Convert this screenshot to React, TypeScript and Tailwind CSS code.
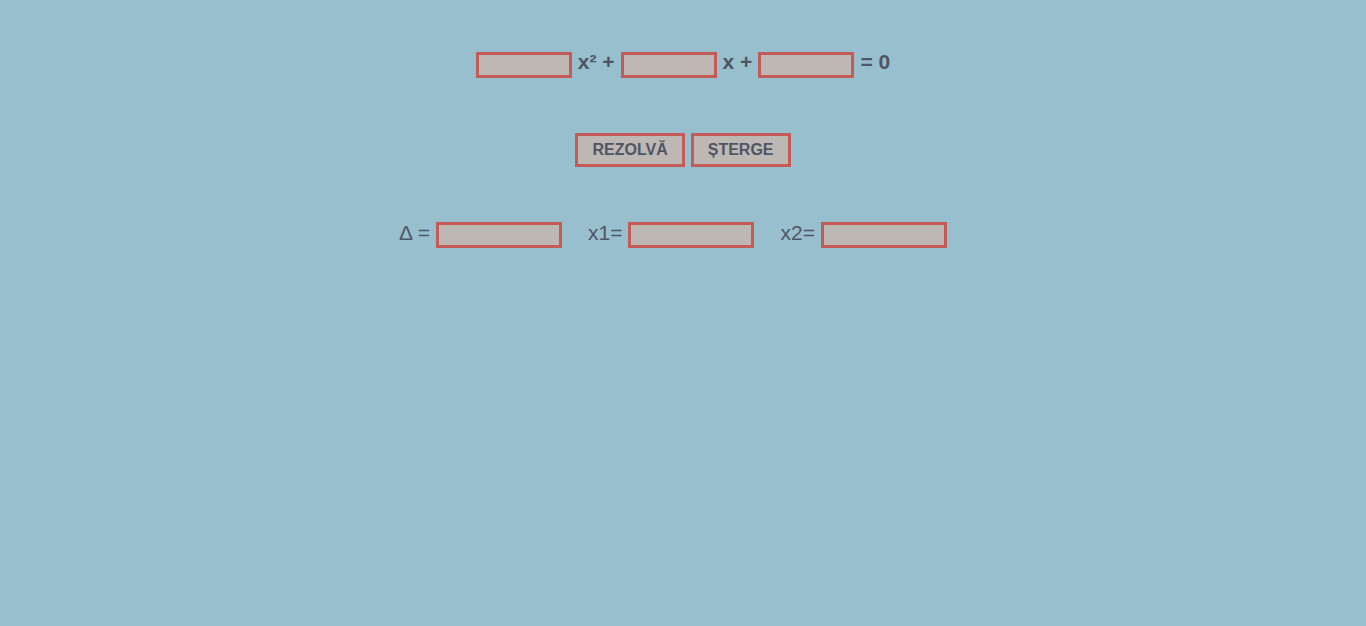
import { useState } from "react";

const box = "h-[26px] border-3 border-[#c45b56] bg-[#bdb8b4] px-1 text-base outline-none";
const button =
  "h-[34px] border-3 border-[#c45b56] bg-[#bdb8b4] px-3.5 text-base leading-7 font-bold";

export default function App() {
  const [a, setA] = useState("");
  const [b, setB] = useState("");
  const [c, setC] = useState("");
  const [delta, setDelta] = useState("");
  const [x1, setX1] = useState("");
  const [x2, setX2] = useState("");

  const solve = () => {
    const [p, q, r] = [Number(a), Number(b), Number(c)];
    const d = q * q - 4 * p * r;
    setDelta(String(d));
    const real = d >= 0 && p !== 0;
    setX1(real ? String((-q + Math.sqrt(d)) / (2 * p)) : "");
    setX2(real ? String((-q - Math.sqrt(d)) / (2 * p)) : "");
  };

  const clear = () => {
    [setA, setB, setC, setDelta, setX1, setX2].forEach((set) => set(""));
  };

  return (
    <main className="flex min-h-screen flex-col items-center bg-[#97bfce] pt-[52px] font-['Liberation_Sans',Arial,sans-serif] text-[21px] leading-5 text-[#505565]">
      <div className="flex items-start gap-1.5 font-bold">
        <input id="a" className={`${box} w-24`} value={a} onChange={(e) => setA(e.target.value)} />
        <label htmlFor="a">x² +</label>
        <input id="b" className={`${box} w-24`} value={b} onChange={(e) => setB(e.target.value)} />
        <label htmlFor="b">x +</label>
        <input id="c" className={`${box} w-24`} value={c} onChange={(e) => setC(e.target.value)} />
        <label htmlFor="c">= 0</label>
      </div>
      <div className="mt-[55px] flex gap-1.5">
        <button type="button" className={button} onClick={solve}>REZOLVĂ</button>
        <button type="button" className={button} onClick={clear}>ȘTERGE</button>
      </div>
      <div className="mt-[55px] flex gap-[26px] pr-5 leading-[22px]">
        <div className="flex items-start gap-1.5">
          <label htmlFor="delta">Δ =</label>
          <input id="delta" readOnly className={`${box} w-[126px]`} value={delta} />
        </div>
        <div className="flex items-start gap-1.5">
          <label htmlFor="x1">x1=</label>
          <input id="x1" readOnly className={`${box} w-[126px]`} value={x1} />
        </div>
        <div className="flex items-start gap-1.5">
          <label htmlFor="x2">x2=</label>
          <input id="x2" readOnly className={`${box} w-[126px]`} value={x2} />
        </div>
      </div>
    </main>
  );
}
